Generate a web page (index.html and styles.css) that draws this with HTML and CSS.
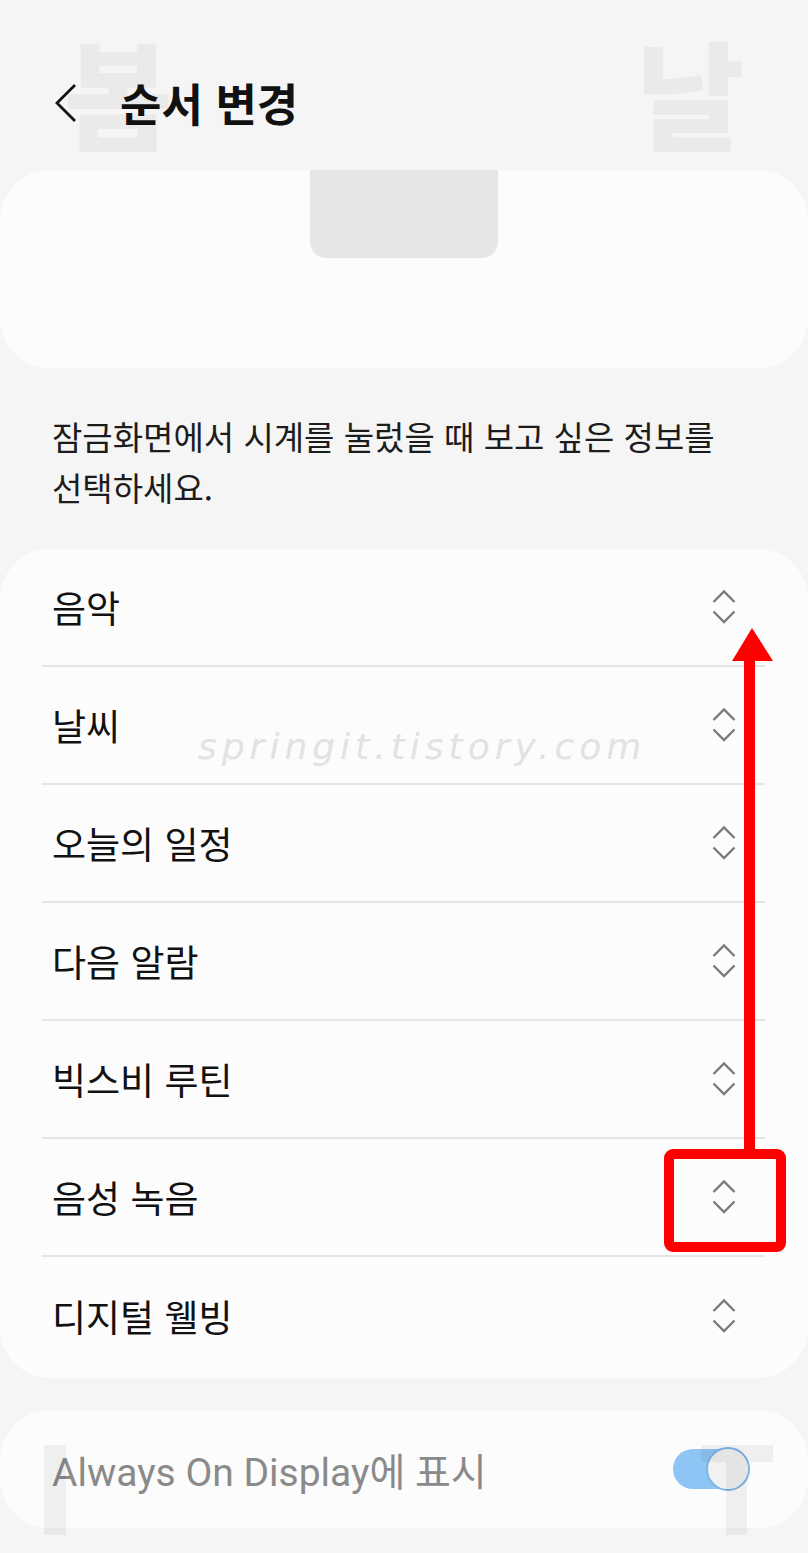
FILE: index.html
```html
<!DOCTYPE html>
<html lang="ko">
<head>
    <meta charset="UTF-8">
    <meta name="viewport" content="width=device-width, initial-scale=1.0">
    <title>순서 변경</title>
    <link rel="stylesheet" href="styles.css">
</head>
<body>

    <div class="screen">
        <div class="header">
            <svg class="back" width="26" height="40" viewBox="0 0 26 40">
                <polyline points="22,2 4,20 22,38" fill="none" stroke="#111" stroke-width="2.8"/>
            </svg>
            <h1>순서 변경</h1>
        </div>

        <div class="card preview">
            <div class="tab"></div>
        </div>

        <p class="desc">잠금화면에서 시계를 눌렀을 때 보고 싶은 정보를<br>선택하세요.</p>

        <div class="card list">
            <div class="row"><span>음악</span><svg class="handle" width="24" height="36" viewBox="0 0 24 36"><polyline points="1.5,13 12,2.5 22.5,13"/><polyline points="1.5,22.5 12,33 22.5,22.5"/></svg></div>
            <div class="row"><span>날씨</span><svg class="handle" width="24" height="36" viewBox="0 0 24 36"><polyline points="1.5,13 12,2.5 22.5,13"/><polyline points="1.5,22.5 12,33 22.5,22.5"/></svg></div>
            <div class="row"><span>오늘의 일정</span><svg class="handle" width="24" height="36" viewBox="0 0 24 36"><polyline points="1.5,13 12,2.5 22.5,13"/><polyline points="1.5,22.5 12,33 22.5,22.5"/></svg></div>
            <div class="row"><span>다음 알람</span><svg class="handle" width="24" height="36" viewBox="0 0 24 36"><polyline points="1.5,13 12,2.5 22.5,13"/><polyline points="1.5,22.5 12,33 22.5,22.5"/></svg></div>
            <div class="row"><span>빅스비 루틴</span><svg class="handle" width="24" height="36" viewBox="0 0 24 36"><polyline points="1.5,13 12,2.5 22.5,13"/><polyline points="1.5,22.5 12,33 22.5,22.5"/></svg></div>
            <div class="row"><span>음성 녹음</span><svg class="handle" width="24" height="36" viewBox="0 0 24 36"><polyline points="1.5,13 12,2.5 22.5,13"/><polyline points="1.5,22.5 12,33 22.5,22.5"/></svg></div>
            <div class="row"><span>디지털 웰빙</span><svg class="handle" width="24" height="36" viewBox="0 0 24 36"><polyline points="1.5,13 12,2.5 22.5,13"/><polyline points="1.5,22.5 12,33 22.5,22.5"/></svg></div>
        </div>

        <div class="card aod">
            <span>Always On Display에 표시</span>
            <div class="switch"><div class="thumb"></div></div>
        </div>

        <!-- blog watermark -->
        <div class="wm wm-left">봄</div>
        <div class="wm wm-right">날</div>
        <div class="wm-bar bar-a"></div>
        <div class="wm-bar bar-b"></div>
        <div class="wm-bar bar-c"></div>
        <div class="wm-site">springit.tistory.com</div>

        <!-- annotation -->
        <svg class="mark" width="808" height="1553" viewBox="0 0 808 1553">
            <rect x="744" y="656" width="11" height="494" fill="#f00"/>
            <polygon points="752,628 732,661 773,661" fill="#f00"/>
            <rect x="669" y="1154" width="112" height="93" rx="4" fill="none" stroke="#f00" stroke-width="10"/>
        </svg>
    </div>

</body>
</html>
```

FILE: styles.css
```css
body { margin: 0; background-color: #f5f5f5; font-family: "Noto Sans CJK KR", "Noto Sans", sans-serif; color: #111; }
.screen { position: relative; width: 808px; height: 1553px; overflow: hidden; }

.header { height: 170px; display: flex; align-items: center; padding: 36px 0 0 53px; box-sizing: border-box; }
.back { margin-right: 41px; }
h1 { margin: 0; font-size: 45px; font-weight: 700; line-height: 1.2; }

.card { background-color: #fcfcfc; border-radius: 50px; }
.preview { height: 198px; }
.tab { width: 188px; height: 88px; margin: 0 auto; background-color: #e6e6e6; border-radius: 0 0 16px 16px; }

.desc { margin: 0; padding: 43px 52px 36px; font-size: 33px; line-height: 51px; color: #1c1c1c; white-space: nowrap; }

.list { height: 829px; }
.row { height: 118px; margin: 0 43px 0 42px; padding: 0 29px 0 10px; display: flex; align-items: center; justify-content: space-between; border-bottom: 2px solid #e6e6e6; box-sizing: border-box; font-size: 37px; }
.row:last-child { border-bottom: none; }
.handle polyline { fill: none; stroke: #7a7a7a; stroke-width: 2.3; }

.aod { margin-top: 32px; height: 118px; display: flex; align-items: center; justify-content: space-between; padding: 0 68px 0 52px; box-sizing: border-box; }
.aod span { font-family: Roboto, "Noto Sans CJK KR", sans-serif; font-size: 39px; color: #8a8a8a; }
.switch { width: 67px; height: 40px; border-radius: 20px; background-color: #8ec5f4; display: flex; align-items: center; justify-content: flex-end; }
.thumb { width: 40px; height: 40px; flex-shrink: 0; margin-right: -10px; border-radius: 50%; background-color: #f1f1f1; border: 2px solid #7db4e6; }

.wm { position: absolute; top: 26px; font-size: 118px; font-weight: 900; line-height: 1.1; color: rgba(0, 0, 0, 0.045); pointer-events: none; }
.wm-left { left: 64px; }
.wm-right { left: 636px; }
.wm-bar { position: absolute; background-color: rgba(0, 0, 0, 0.05); }
.bar-a { left: 44px; top: 1445px; width: 22px; height: 90px; }
.bar-b { left: 701px; top: 1445px; width: 72px; height: 17px; }
.bar-c { left: 726px; top: 1462px; width: 21px; height: 73px; }
.wm-site { position: absolute; left: 198px; top: 726px; font-family: "DejaVu Sans", sans-serif; font-size: 36px; font-style: italic; font-weight: 200; letter-spacing: 5px; color: #e2e2e2; }

.mark { position: absolute; left: 0; top: 0; pointer-events: none; }
```
